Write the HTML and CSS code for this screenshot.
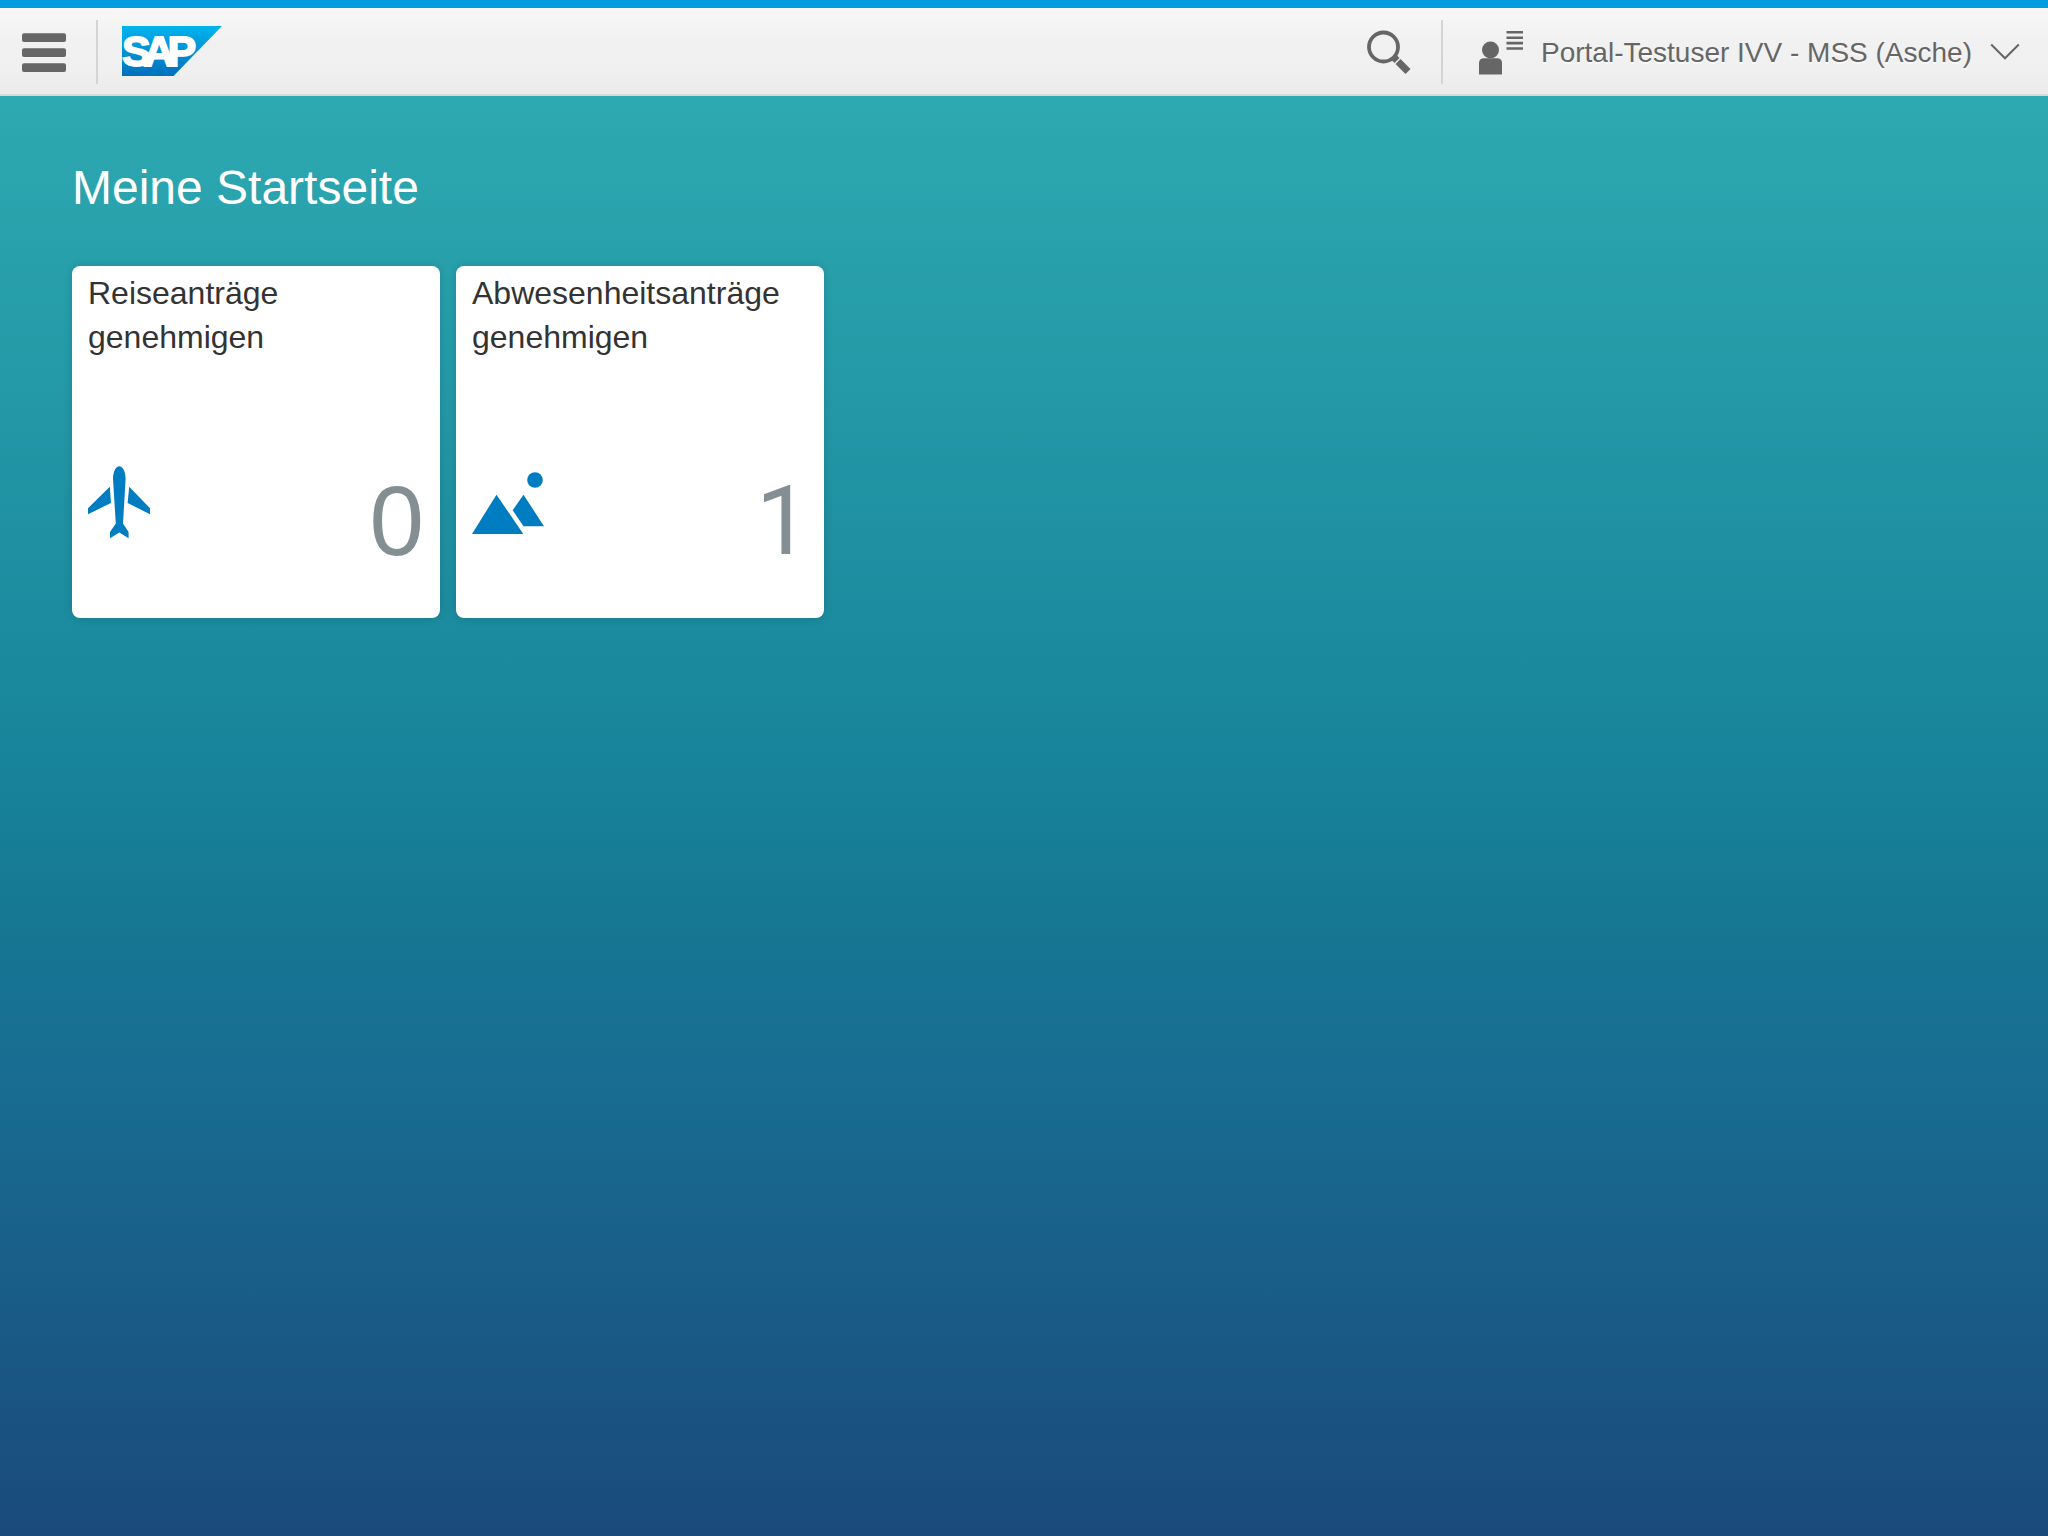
FILE: index.html
```html
<!DOCTYPE html>
<html lang="de">
<head>
<meta charset="utf-8">
<title>Meine Startseite</title>
<link rel="stylesheet" href="styles.css">
</head>
<body>
<header class="shell-header">
  <button class="menu-button" aria-label="Menü">
    <svg width="44" height="42" viewBox="0 0 44 42" fill="#666">
      <rect y="0.3" width="44" height="8.6" rx="2"/>
      <rect y="15.3" width="44" height="8.6" rx="2"/>
      <rect y="30.3" width="44" height="8.6" rx="2"/>
    </svg>
  </button>
  <span class="divider"></span>
  <svg class="logo" width="100" height="50" viewBox="0 0 100 50">
    <defs>
      <linearGradient id="logo-fill" x1="0" y1="0" x2="0" y2="1">
        <stop offset="0" stop-color="#00b4ee"/>
        <stop offset="1" stop-color="#0070bd"/>
      </linearGradient>
    </defs>
    <path d="M0 0H100L51.5 50H0Z" fill="url(#logo-fill)"/>
    <text class="logo-text" x="0 21.5 45.5" y="39.5">SAP</text>
  </svg>
  <span class="spacer"></span>
  <svg class="search" width="46" height="46" viewBox="0 0 46 46" fill="none" stroke="#666">
    <circle cx="16.5" cy="17" r="14.5" stroke-width="3.8"/>
    <path d="M26 26.5L30 30.5" stroke-width="7"/>
    <path d="M31 31.5L41 41.5" stroke-width="7"/>
  </svg>
  <span class="divider"></span>
  <button class="user-button">
    <svg width="46" height="46" viewBox="0 0 46 46" fill="#666">
      <circle cx="12.5" cy="20" r="8.5"/>
      <path d="M1 44.5V33Q1 28.2 6 28.2H19Q24 28.2 24 33V44.5Z"/>
      <path d="M28.5 1H45V3.6H28.5ZM28.5 6.4H45V9H28.5ZM28.5 11.8H45V14.4H28.5ZM28.5 17.2H45V19.8H28.5Z"/>
    </svg>
    <span class="user-name">Portal-Testuser IVV - MSS (Asche)</span>
    <svg class="chevron" width="30" height="18" viewBox="0 0 30 18" fill="none" stroke="#666" stroke-width="2">
      <path d="M1.2 1.5L15 15.3L28.8 1.5"/>
    </svg>
  </button>
</header>
<main class="home">
  <h1 class="group-title">Meine Startseite</h1>
  <div class="tiles">
    <article class="tile">
      <h2 class="tile-title">Reiseanträge genehmigen</h2>
      <div class="tile-content">
        <svg class="tile-icon" width="72" height="74" viewBox="0 0 72 74" fill="#007cc0">
          <path d="M31.3 0.2C34.6 0.2 37.7 5.5 37.6 13L35 57.5L40.6 66V72.3L31.3 66.6L22 72.3V66L27.8 57.5L25 13C25 5.5 28 0.2 31.3 0.2Z"/>
          <path d="M21.8 20.8L23 37L0 48.2V42.2ZM41.2 20.8L39.6 37L62 48.2V42.2Z"/>
        </svg>
        <span class="tile-number">0</span>
      </div>
    </article>
    <article class="tile">
      <h2 class="tile-title">Abwesenheitsanträge genehmigen</h2>
      <div class="tile-content">
        <svg class="tile-icon" width="72" height="74" viewBox="0 0 72 74" fill="#007cc0">
          <circle cx="63" cy="14" r="7.8"/>
          <path d="M24.5 28.7L51.3 67.9H0Z"/>
          <path d="M51.5 28.7L72 60.2H51.5L40.7 44.2Z"/>
        </svg>
        <span class="tile-number tile-number-plain">1</span>
      </div>
    </article>
  </div>
</main>
</body>
</html>
```
FILE: styles.css
```css
* {
  box-sizing: border-box;
}

body {
  margin: 0;
  height: 1536px;
  overflow: hidden;
  display: flex;
  flex-direction: column;
  font-family: "Liberation Sans", Arial, sans-serif;
  background: linear-gradient(to bottom, #2da9b1 96px, #17839a 772px, #167692 940px, #186c92 1086px, #1a4a7c 100%);
}

button {
  margin: 0;
  padding: 0;
  border: 0;
  background: none;
  font: inherit;
  color: inherit;
}

.shell-header {
  flex: none;
  display: flex;
  align-items: flex-start;
  height: 96px;
  border-top: 8px solid #009de0;
  border-bottom: 2px solid #d9d9d9;
  background: linear-gradient(to bottom, #f7f7f7, #f1f1f1 40%, #f0f0f0 70%, #ebebeb);
  color: #666;
}

.menu-button {
  display: flex;
  width: 96px;
  padding: 25px 0 0 22px;
}

.divider {
  width: 2px;
  height: 64px;
  margin-top: 12px;
  background: #d4d4d4;
}

.logo {
  margin: 18px 0 0 24px;
}

.logo-text {
  font-size: 43px;
  font-weight: bold;
  fill: #fff;
  stroke: #fff;
  stroke-width: 1.8px;
}

.spacer {
  flex: 1;
}

.search {
  margin: 22px 28px 0 0;
}

.user-button {
  display: flex;
  align-items: flex-start;
  padding: 22px 28px 0 35px;
}

.user-name {
  margin: 7px 0 0 17px;
  font-size: 28px;
  line-height: 32px;
  white-space: nowrap;
  text-shadow: 0 2px 0 rgba(255, 255, 255, 0.6);
}

.chevron {
  margin: 13px 0 0 18px;
}

.home {
  padding: 64px 72px;
}

.group-title {
  margin: 0 0 50px;
  font-size: 48px;
  font-weight: normal;
  line-height: 56px;
  color: #fff;
}

.tiles {
  display: flex;
  gap: 16px;
}

.tile {
  display: flex;
  flex-direction: column;
  width: 368px;
  height: 352px;
  padding: 5px 16px 0;
  border-radius: 8px;
  background: #fff;
  box-shadow: 0 0 8px rgba(0, 0, 0, 0.15);
}

.tile-title {
  height: 88px;
  margin: 0;
  font-size: 32px;
  font-weight: normal;
  line-height: 44px;
  color: #333;
}

.tile-content {
  display: flex;
  justify-content: space-between;
  margin-top: 107px;
}

.tile-number {
  font-size: 98px;
  line-height: 110px;
  color: #848f94;
}

/* Numeral one without a foot serif */
.tile-number-plain {
  margin-right: -2px;
  font-size: 96px;
  font-family: Roboto, sans-serif;
}
```
